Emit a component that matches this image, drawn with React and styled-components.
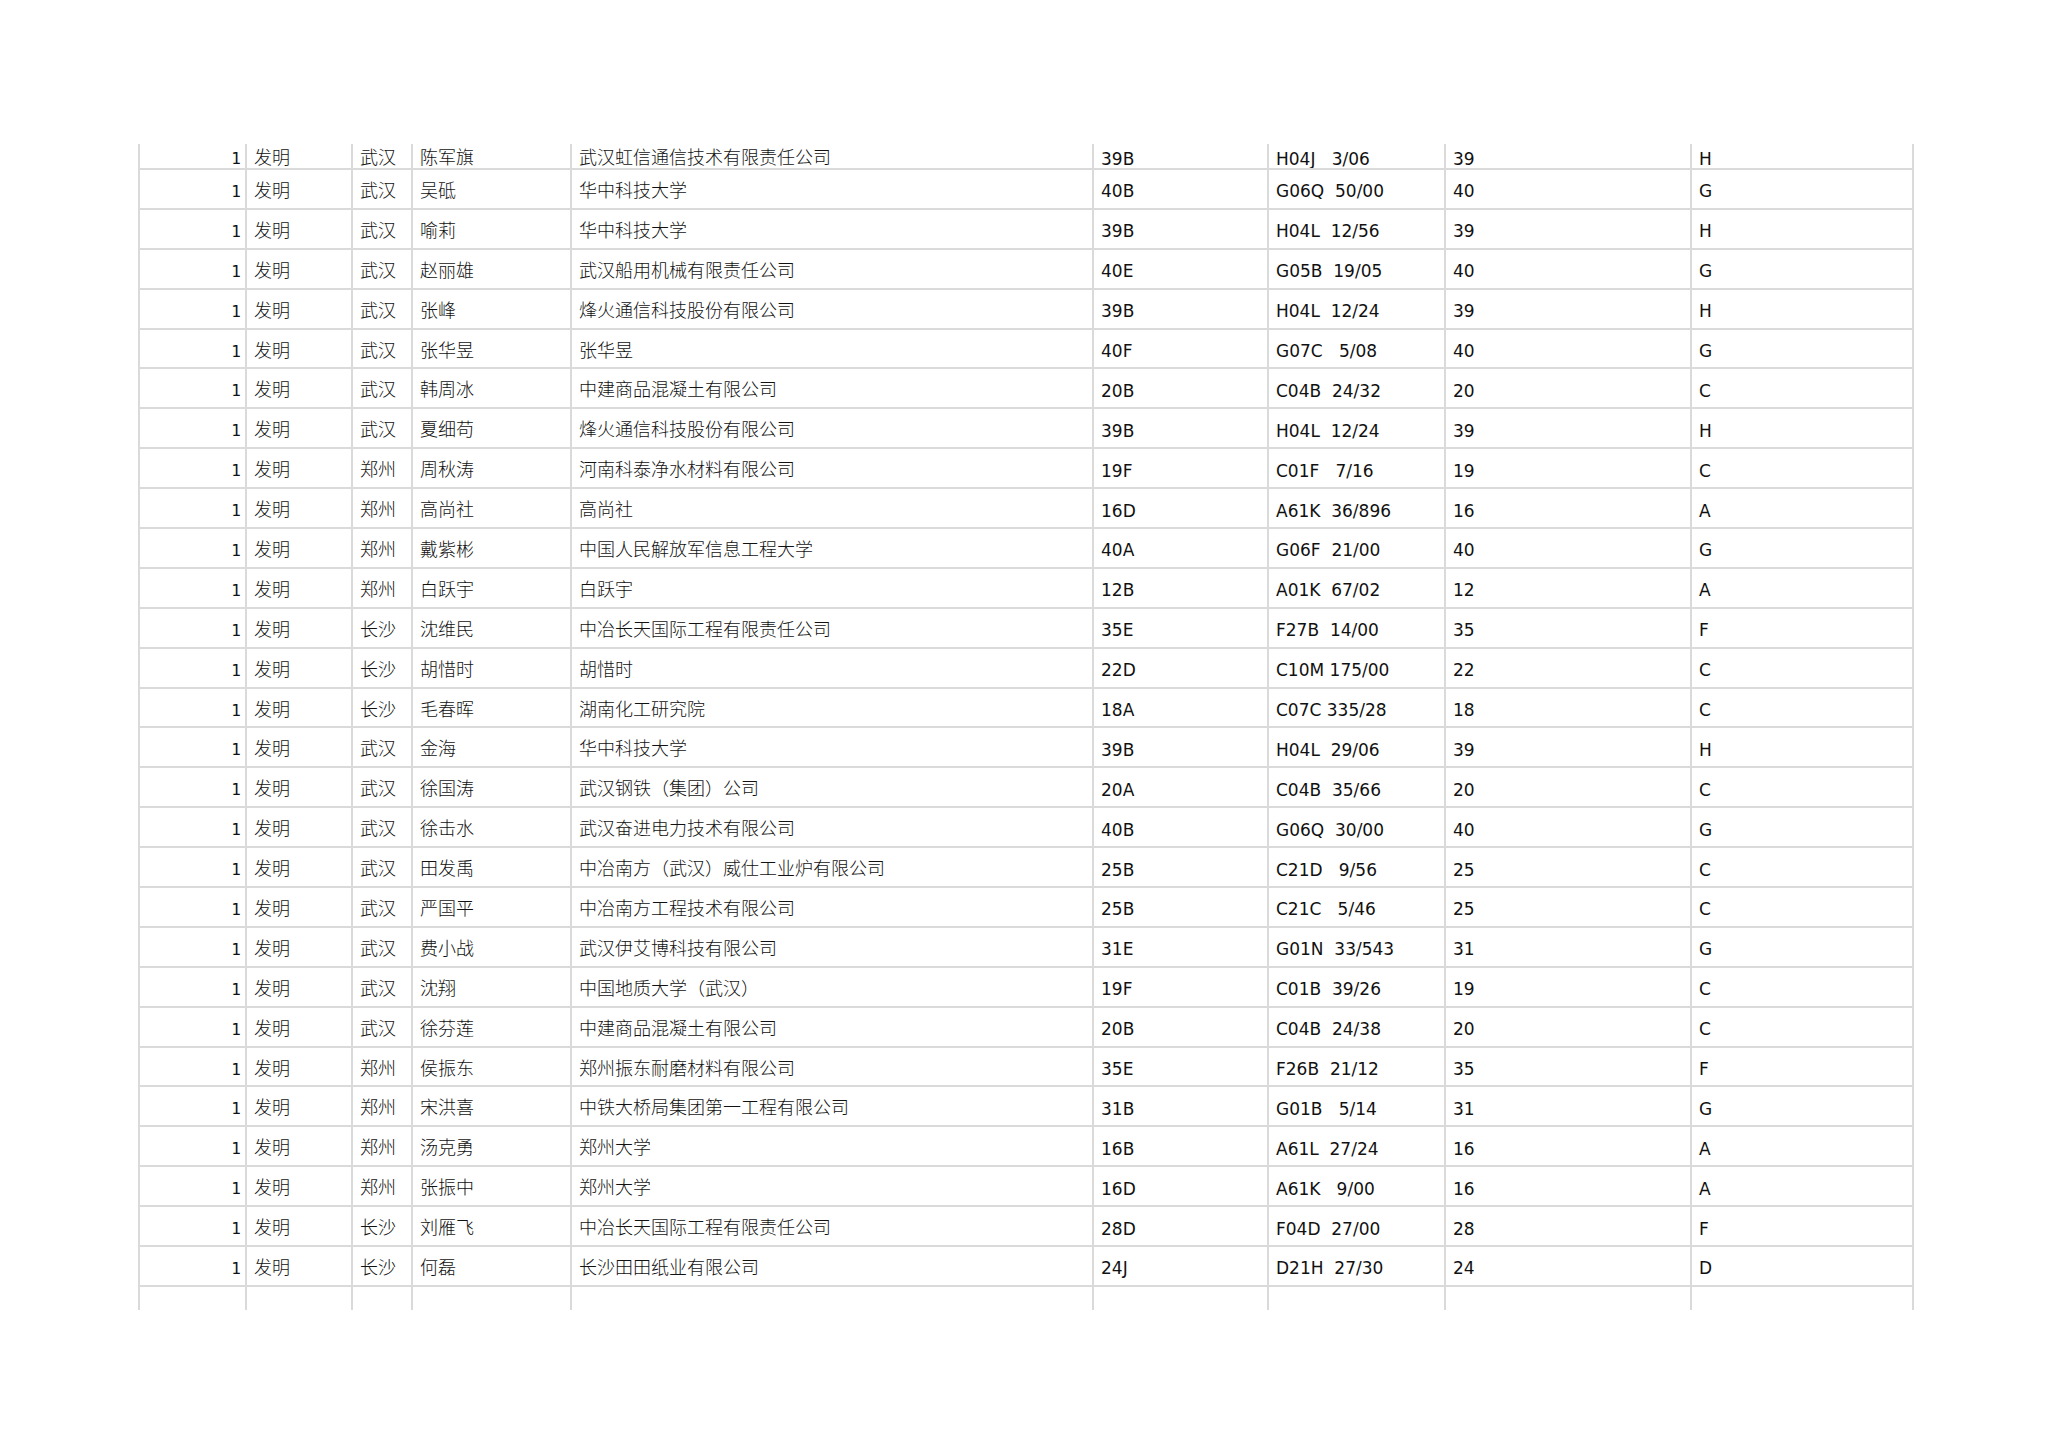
import React from "react";
import styled, { createGlobalStyle } from "styled-components";

const GlobalStyle = createGlobalStyle`
  html, body {
    margin: 0;
    padding: 0;
    background: #ffffff;
  }
  body {
    width: 2048px;
    height: 1447px;
    overflow: hidden;
  }
`;

const Page = styled.div`
  padding-top: 144px;
  padding-left: 138px;
`;

// grid lines are the background showing through the gaps
const Sheet = styled.div`
  display: grid;
  grid-template-columns: 105px 104px 58px 157px 520px 173px 175px 244px 220px;
  grid-template-rows: 24px repeat(28, 37.9px) 23px;
  column-gap: 2px;
  row-gap: 2px;
  padding: 0 2px;
  width: fit-content;
  background: #dadada;
`;

const Cell = styled.div`
  display: flex;
  align-items: center;
  justify-content: ${(p) => (p.$right ? "flex-end" : "flex-start")};
  padding: ${(p) => (p.$right ? "0 4px 0 0" : "0 0 0 7px")};
  padding-top: ${(p) => (p.$latin || p.$digit ? "6px" : "0")};
  background: #ffffff;
  color: #111111;
  white-space: pre;
  overflow: hidden;
  font-family: ${(p) =>
    p.$latin
      ? '"DejaVu Sans", Verdana, sans-serif'
      : p.$digit
      ? '"DejaVu Sans Mono", "Liberation Mono", monospace'
      : '"Noto Sans CJK SC", "Noto Sans", sans-serif'};
  font-size: ${(p) => (p.$latin ? "17px" : p.$digit ? "16px" : "18px")};
  font-weight: ${(p) => (p.$latin || p.$digit ? 400 : 300)};
  line-height: 1;
`;

const rows = [
  ["武汉", "陈军旗", "武汉虹信通信技术有限责任公司", "39B", "H04J   3/06", "39", "H"],
  ["武汉", "吴砥", "华中科技大学", "40B", "G06Q  50/00", "40", "G"],
  ["武汉", "喻莉", "华中科技大学", "39B", "H04L  12/56", "39", "H"],
  ["武汉", "赵丽雄", "武汉船用机械有限责任公司", "40E", "G05B  19/05", "40", "G"],
  ["武汉", "张峰", "烽火通信科技股份有限公司", "39B", "H04L  12/24", "39", "H"],
  ["武汉", "张华昱", "张华昱", "40F", "G07C   5/08", "40", "G"],
  ["武汉", "韩周冰", "中建商品混凝土有限公司", "20B", "C04B  24/32", "20", "C"],
  ["武汉", "夏细苟", "烽火通信科技股份有限公司", "39B", "H04L  12/24", "39", "H"],
  ["郑州", "周秋涛", "河南科泰净水材料有限公司", "19F", "C01F   7/16", "19", "C"],
  ["郑州", "高尚社", "高尚社", "16D", "A61K  36/896", "16", "A"],
  ["郑州", "戴紫彬", "中国人民解放军信息工程大学", "40A", "G06F  21/00", "40", "G"],
  ["郑州", "白跃宇", "白跃宇", "12B", "A01K  67/02", "12", "A"],
  ["长沙", "沈维民", "中冶长天国际工程有限责任公司", "35E", "F27B  14/00", "35", "F"],
  ["长沙", "胡惜时", "胡惜时", "22D", "C10M 175/00", "22", "C"],
  ["长沙", "毛春晖", "湖南化工研究院", "18A", "C07C 335/28", "18", "C"],
  ["武汉", "金海", "华中科技大学", "39B", "H04L  29/06", "39", "H"],
  ["武汉", "徐国涛", "武汉钢铁（集团）公司", "20A", "C04B  35/66", "20", "C"],
  ["武汉", "徐击水", "武汉奋进电力技术有限公司", "40B", "G06Q  30/00", "40", "G"],
  ["武汉", "田发禹", "中冶南方（武汉）威仕工业炉有限公司", "25B", "C21D   9/56", "25", "C"],
  ["武汉", "严国平", "中冶南方工程技术有限公司", "25B", "C21C   5/46", "25", "C"],
  ["武汉", "费小战", "武汉伊艾博科技有限公司", "31E", "G01N  33/543", "31", "G"],
  ["武汉", "沈翔", "中国地质大学（武汉）", "19F", "C01B  39/26", "19", "C"],
  ["武汉", "徐芬莲", "中建商品混凝土有限公司", "20B", "C04B  24/38", "20", "C"],
  ["郑州", "侯振东", "郑州振东耐磨材料有限公司", "35E", "F26B  21/12", "35", "F"],
  ["郑州", "宋洪喜", "中铁大桥局集团第一工程有限公司", "31B", "G01B   5/14", "31", "G"],
  ["郑州", "汤克勇", "郑州大学", "16B", "A61L  27/24", "16", "A"],
  ["郑州", "张振中", "郑州大学", "16D", "A61K   9/00", "16", "A"],
  ["长沙", "刘雁飞", "中冶长天国际工程有限责任公司", "28D", "F04D  27/00", "28", "F"],
  ["长沙", "何磊", "长沙田田纸业有限公司", "24J", "D21H  27/30", "24", "D"],
];

const Row = ({ r }) => (
  <>
    <Cell $right $digit>1</Cell>
    <Cell>发明</Cell>
    <Cell>{r[0]}</Cell>
    <Cell>{r[1]}</Cell>
    <Cell>{r[2]}</Cell>
    <Cell $latin>{r[3]}</Cell>
    <Cell $latin>{r[4]}</Cell>
    <Cell $latin>{r[5]}</Cell>
    <Cell $latin>{r[6]}</Cell>
  </>
);

const App = () => {
  return (
    <Page>
      <GlobalStyle />
      <Sheet>
        {rows.map((r, i) => (
          <Row key={i} r={r} />
        ))}
        {Array.from({ length: 9 }).map((_, i) => (
          <Cell key={"e" + i} />
        ))}
      </Sheet>
    </Page>
  );
};

export default App;
